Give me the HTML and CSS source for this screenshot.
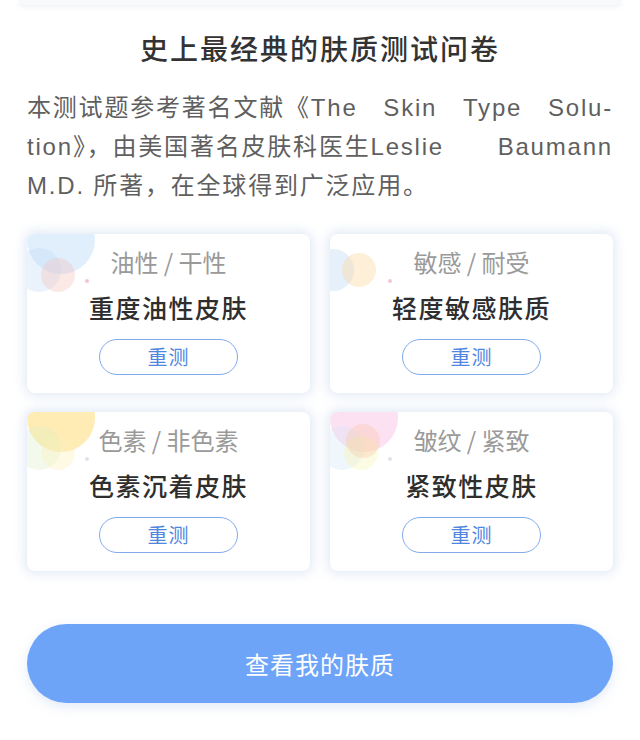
FILE: index.html
```html
<!DOCTYPE html>
<html lang="zh-CN">
<head>
<meta charset="utf-8">
<title>肤质测试问卷</title>
<link rel="stylesheet" href="styles.css">
</head>
<body>
<div class="top-strip"></div>
<main class="page">
  <h1 class="title">史上最经典的肤质测试问卷</h1>
  <p class="intro"><span class="run">本测试题参考著名文献《The</span> <span class="run">Skin</span> <span class="run">Type</span> <span class="run">Solu-</span><span class="run">tion》，由美国著名皮肤科医生Leslie</span> <span class="run">Baumann</span> <span class="run">M.D.</span> <span class="run">所著，在全球得到广泛应用。</span></p>

  <section class="grid">
    <div class="card">
      <span class="deco big blue-a"></span>
      <span class="deco mid blue-b"></span>
      <span class="deco small pink-a"></span>
      <span class="dot dot-pink"></span>
      <div class="label">油性 / 干性</div>
      <div class="result">重度油性皮肤</div>
      <button class="retest">重测</button>
    </div>
    <div class="card">
      <span class="deco side blue-c"></span>
      <span class="deco small2 orange-a"></span>
      <span class="dot dot-pink2"></span>
      <div class="label">敏感 / 耐受</div>
      <div class="result">轻度敏感肤质</div>
      <button class="retest">重测</button>
    </div>
    <div class="card">
      <span class="deco big yellow-a"></span>
      <span class="deco mid green-a"></span>
      <span class="deco small yellow-b"></span>
      <span class="dot dot-gray"></span>
      <div class="label">色素 / 非色素</div>
      <div class="result">色素沉着皮肤</div>
      <button class="retest">重测</button>
    </div>
    <div class="card">
      <span class="deco big pink-b"></span>
      <span class="deco mid blue-d"></span>
      <span class="deco small yellow-c"></span>
      <span class="deco small3 peach-a"></span>
      <span class="dot dot-gray"></span>
      <div class="label">皱纹 / 紧致</div>
      <div class="result">紧致性皮肤</div>
      <button class="retest">重测</button>
    </div>
  </section>

  <button class="cta">查看我的肤质</button>
</main>
</body>
</html>
```

FILE: styles.css
```css
* { box-sizing: border-box; }

body {
  margin: 0;
  background: #ffffff;
  font-family: "Noto Sans CJK SC", "Noto Sans", sans-serif;
  color: #333;
}

.top-strip {
  height: 5px;
  margin: 0 18px;
  background: #f8f9fb;
  border-radius: 0 0 8px 8px;
  box-shadow: 0 2px 4px rgba(225, 230, 240, 0.5);
}

.page {
  padding: 0 27px 40px;
}

.title {
  margin: 24px 0 0;
  font-size: 28px;
  line-height: 38px;
  font-weight: 500;
  text-align: center;
  color: #333;
  letter-spacing: 2px;
}

.intro {
  margin: 21px 0 0;
  font-family: "Liberation Sans", "Noto Sans CJK SC", sans-serif;
  font-size: 24px;
  line-height: 39px;
  color: #5f5f5f;
  text-align: justify;
  letter-spacing: 1.8px;
}

.run {
  display: inline-block;
  white-space: nowrap;
}

.grid {
  margin-top: 29px;
  display: grid;
  grid-template-columns: 1fr 1fr;
  column-gap: 20px;
  row-gap: 19px;
}

.card {
  position: relative;
  overflow: hidden;
  height: 159px;
  background: #fff;
  border-radius: 8px;
  box-shadow: 0 0 11px 3px rgba(220, 229, 244, 0.8);
  display: flex;
  flex-direction: column;
  align-items: center;
  padding-top: 13px;
}

.label {
  position: relative;
  font-size: 24px;
  line-height: 30px;
  color: #9a9a9a;
}

.result {
  position: relative;
  margin-top: 14px;
  font-size: 25px;
  line-height: 32px;
  font-weight: 500;
  color: #2e2e2e;
  letter-spacing: 1.5px;
}

.retest {
  position: relative;
  margin-top: 16px;
  width: 139px;
  height: 36px;
  border: 1px solid #82a9ec;
  border-radius: 18px;
  background: #fff;
  font-family: inherit;
  font-size: 20px;
  line-height: 34px;
  padding: 0;
  color: #4f86e0;
  letter-spacing: 1px;
}

.deco, .dot {
  position: absolute;
  border-radius: 50%;
}

.big { width: 68px; height: 68px; left: 0; top: -28px; opacity: 0.35; }
.mid { width: 44px; height: 44px; left: -10px; top: 14px; opacity: 0.3; }
.small { width: 34px; height: 34px; left: 14px; top: 24px; opacity: 0.35; }
.small3 { width: 34px; height: 34px; left: 16px; top: 12px; opacity: 0.35; }
.side { width: 42px; height: 42px; left: -18px; top: 15px; opacity: 0.35; }
.small2 { width: 34px; height: 34px; left: 12px; top: 19px; opacity: 0.4; }

.blue-a { background: #a9d2f8; }
.blue-b { background: #b8d8f5; }
.pink-a { background: #f4c1b8; }
.blue-c { background: #b5d3f2; }
.orange-a { background: #fcd8a0; }
.yellow-a { background: #ffd45a; opacity: 0.45; }
.green-a { background: #d6efc2; }
.yellow-b { background: #fbf0b8; }
.pink-b { background: #f7a8dc; }
.blue-d { background: #cde6f4; }
.yellow-c { background: #f6f4b0; }
.peach-a { background: #f9c8a4; }

.dot { width: 4px; height: 4px; left: 58px; top: 45px; }
.dot-pink { background: #f0c8cc; }
.dot-pink2 { background: #f5c6cc; }
.dot-gray { background: #dde2ea; }

.cta {
  display: block;
  width: 100%;
  margin-top: 53px;
  height: 79px;
  border: none;
  border-radius: 40px;
  background: #6ea4f8;
  color: #fff;
  font-family: inherit;
  font-size: 24px;
  letter-spacing: 1px;
  box-shadow: 0 4px 12px rgba(200, 215, 240, 0.5);
}
```
